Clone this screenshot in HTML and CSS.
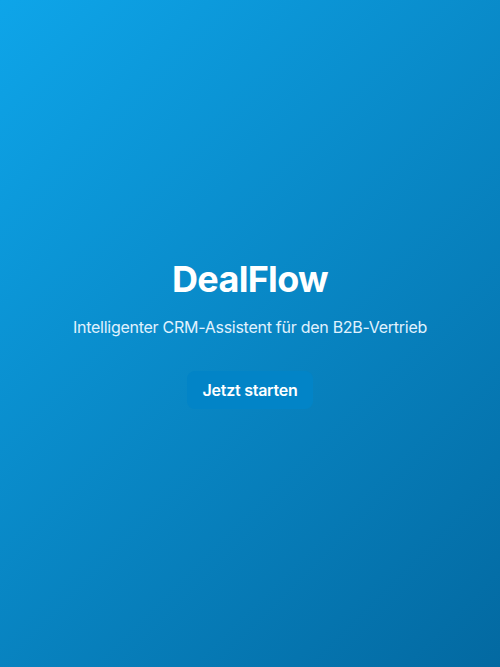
FILE: index.html
```html
<!DOCTYPE html>
<html lang="de">
<head>
<meta charset="utf-8">
<title>DealFlow</title>
<link rel="stylesheet" href="styles.css">
</head>
<body>
<main class="hero">
  <h1 class="title">DealFlow</h1>
  <p class="subtitle">Intelligenter CRM-Assistent für den B2B-Vertrieb</p>
  <button class="cta" type="button">Jetzt starten</button>
</main>
</body>
</html>
```
FILE: styles.css
```css
html, body {
  margin: 0;
  padding: 0;
  height: 100%;
}
body {
  font-family: Inter, "Noto Sans", sans-serif;
  background: linear-gradient(135deg, #0ea5e9 0%, #0369a1 100%);
  color: #fff;
}
.hero {
  min-height: 100vh;
  display: flex;
  flex-direction: column;
  align-items: center;
  justify-content: center;
  text-align: center;
}
.title {
  margin: 0 0 16px;
  font-size: 36px;
  line-height: 40px;
  font-weight: 700;
  letter-spacing: -0.7px;
}
.subtitle {
  margin: 0 0 32px;
  font-size: 16px;
  line-height: 24px;
  letter-spacing: -0.27px;
  color: #e0f2fe;
}
.cta {
  font-family: inherit;
  font-size: 16px;
  line-height: 22px;
  font-weight: 600;
  letter-spacing: -0.25px;
  color: #fff;
  background: #0284c7;
  border: none;
  border-radius: 8px;
  padding: 8px 16px;
  cursor: pointer;
}
```
